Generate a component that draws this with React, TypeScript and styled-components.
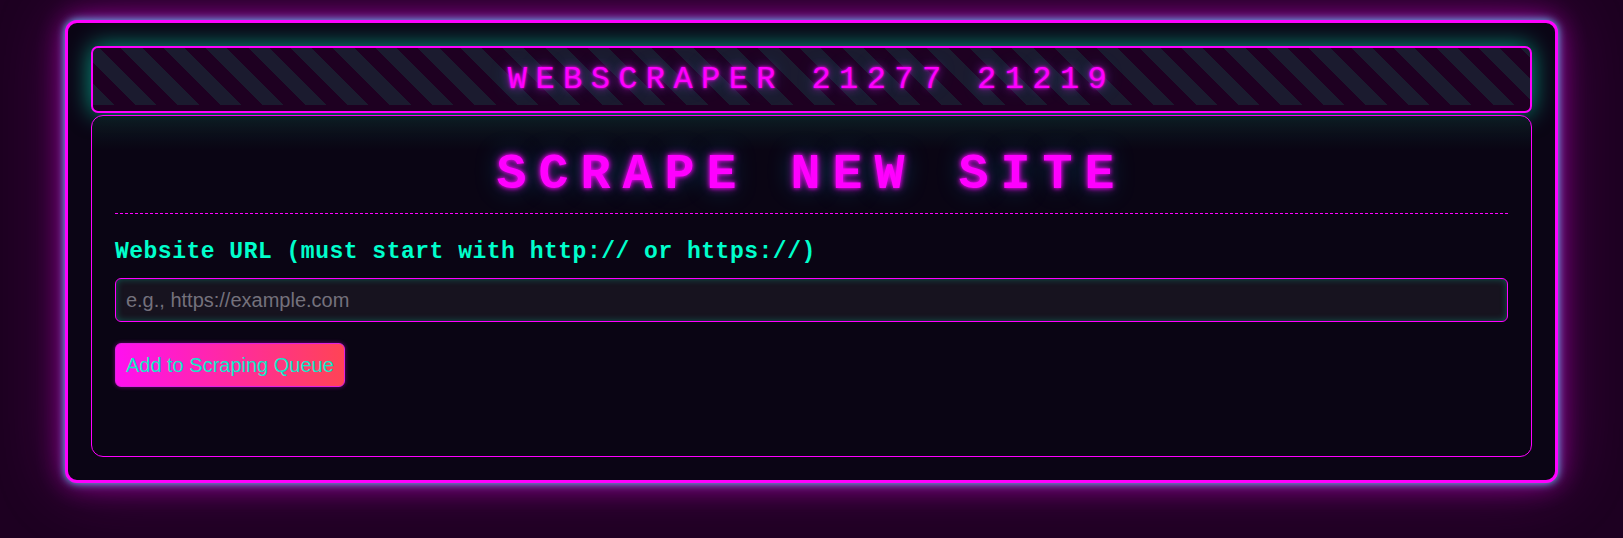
import styled, { createGlobalStyle } from 'styled-components'

const GlobalStyle = createGlobalStyle`
    html, body {
        margin: 0;
        padding: 0;
        background: #1d0021;
        font-family: Arial, "Liberation Sans", sans-serif;
    }
`

const Page = styled.div`
    padding: 20px 0 56px;
`

const Card = styled.div`
    width: 92%;
    margin: 0 auto;
    box-sizing: border-box;
    display: flex;
    flex-direction: column;
    gap: 2px;
    padding: 23px;
    background: #0b0515;
    border: 3px solid #ff00ff;
    border-radius: 12px;
    box-shadow:
        0 0 9px rgba(90, 220, 255, 0.95),
        0 0 28px rgba(255, 0, 255, 0.6),
        0 0 70px rgba(200, 0, 200, 0.3);
`

const Header = styled.header`
    position: relative;
    z-index: 0;
    padding: 15px 14px 14px;
    border: 2px solid #ff00ff;
    border-radius: 7px;
    background-color: #1e0021;
    background-image: repeating-linear-gradient(
        45deg,
        #1b1b2f 0 15px,
        #1e0021 15px 30px
    );
    background-size: 100% calc(100% - 6px);
    background-repeat: no-repeat;
    box-shadow: 0 0 24px rgba(0, 255, 200, 0.6);
    text-align: center;
`

const HeaderTitle = styled.h1`
    margin: 0;
    font-family: "Courier New", "Liberation Mono", monospace;
    font-size: 32px;
    line-height: 34px;
    font-weight: normal;
    letter-spacing: 8.4px;
    color: #ff00ff;
    text-shadow:
        0 0 3px #ff00ff,
        0 0 8px rgba(255, 0, 255, 0.7),
        0 0 18px rgba(0, 200, 255, 0.35);
`

const Panel = styled.section`
    position: relative;
    z-index: 1;
    padding: 24px 23px;
    border: 1px solid #ff00ff;
    border-radius: 12px;
    background: linear-gradient(180deg, rgba(12, 28, 34, 0.9) 0px, #0a0514 34px);
`

const Title = styled.h2`
    margin: 0 0 25px;
    padding: 6px 0 10px;
    border-bottom: 1px dashed #ff00ff;
    text-align: center;
    font-family: "Courier New", "Liberation Mono", monospace;
    font-size: 50px;
    line-height: 57px;
    font-weight: bold;
    letter-spacing: 12px;
    color: #ff00ff;
    text-shadow:
        0 0 4px #ff00ff,
        0 0 10px rgba(255, 0, 255, 0.6),
        0 0 24px rgba(0, 200, 255, 0.35);
`

const Form = styled.form`
    display: flex;
    flex-direction: column;
    align-items: flex-start;
    padding-bottom: 45px;
`

const Label = styled.label`
    margin-bottom: 13px;
    font-family: "Courier New", "Liberation Mono", monospace;
    font-size: 23px;
    line-height: 26px;
    font-weight: bold;
    letter-spacing: 0.5px;
    color: #00ffcc;
`

const UrlInput = styled.input`
    width: 100%;
    height: 44px;
    box-sizing: border-box;
    margin: 0 0 21px;
    padding: 0 10px;
    border: 1px solid #ff00ff;
    border-radius: 6px;
    background: #17131f;
    box-shadow: inset 0 0 7px rgba(0, 255, 200, 0.3);
    font-family: Arial, "Liberation Sans", sans-serif;
    font-size: 20px;
    color: #ddd;
    outline: none;

    &::placeholder {
        color: #74717c;
    }
`

const SubmitButton = styled.button`
    height: 44px;
    box-sizing: border-box;
    padding: 0 10px;
    border: 1px solid #e020e0;
    border-radius: 6px;
    background: linear-gradient(90deg, #ff10f0 0%, #ff2aa0 50%, #ff4455 100%);
    box-shadow: 0 0 4px rgba(255, 0, 255, 0.4);
    font-family: Arial, "Liberation Sans", sans-serif;
    font-size: 20px;
    line-height: 22px;
    color: #10e8c8;
    cursor: pointer;
`

const App = () => {
    return (
        <>
            <GlobalStyle />
            <Page>
                <Card>
                    <Header>
                        <HeaderTitle>WEBSCRAPER 21277 21219</HeaderTitle>
                    </Header>

                    <Panel>
                        <Title>SCRAPE NEW SITE</Title>
                        <Form onSubmit={e => e.preventDefault()}>
                            <Label htmlFor="url">Website URL (must start with http:// or https://)</Label>
                            <UrlInput id="url" type="text" placeholder="e.g., https://example.com" />
                            <SubmitButton type="submit">Add to Scraping Queue</SubmitButton>
                        </Form>
                    </Panel>
                </Card>
            </Page>
        </>
    )
}

export default App
